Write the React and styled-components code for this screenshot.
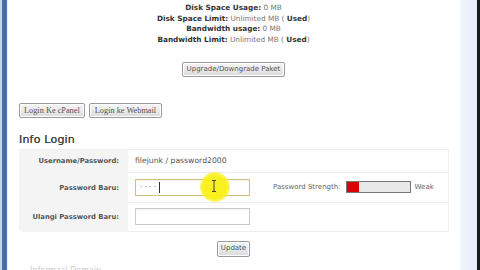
import React from "react";
import styled, { createGlobalStyle } from "styled-components";

const Global = createGlobalStyle`
  html, body { margin: 0; padding: 0; background: #fff; }
  body { width: 480px; height: 270px; overflow: hidden; font-family: "DejaVu Sans", Verdana, sans-serif; }
  #root { width: 480px; height: 270px; }
`;

const Frame = styled.div`
  display: flex;
  width: 480px;
  height: 270px;
  overflow: hidden;
`;

const LeftBar = styled.div`
  width: 8px;
  flex: none;
  background: linear-gradient(90deg, #c9d3e2 0, #c9d3e2 2px, #4f77b3 2px, #3c64a3 5px, #5a80b8 7px, #dfe6f0 7px, #f4f6f9 8px);
`;

const Main = styled.main`
  flex: 1;
  display: flex;
  flex-direction: column;
  padding: 3px 12px 0 11px;
  background: #fff;
  min-width: 0;
`;

const RightStrip = styled.div`
  width: 17px;
  flex: none;
  background: linear-gradient(90deg, #f2f6fd, #e5edfb);
`;

const Edge = styled.div`
  width: 3px;
  flex: none;
  background: #1a1a1a;
`;

const Stats = styled.div`
  text-align: center;
  font-size: 7.3px;
  line-height: 10.7px;
  color: #777;
`;

const Label = styled.b`
  color: #333;
  font-weight: bold;
`;

const CenterRow = styled.div`
  display: flex;
  justify-content: ${(p) => (p.$left ? "flex-start" : "center")};
  gap: 4px;
  margin-top: ${(p) => p.$mt}px;
`;

const Button = styled.button`
  font-family: ${(p) => (p.$serif ? '"Liberation Serif", serif' : '"DejaVu Sans", sans-serif')};
  font-size: ${(p) => (p.$serif ? "8.3px" : "7px")};
  color: #555;
  height: ${(p) => p.$h || 15}px;
  padding: 0 ${(p) => p.$px || 3}px;
  background: linear-gradient(#f6f6f6, #dcdcdc);
  border: 1px solid #9a9a9a;
  border-radius: 2px;
  box-shadow: inset 0 0 0 1px #fff;
  line-height: 13px;
`;

const Heading = styled.h2`
  margin: 15px 0 0;
  font-size: 11px;
  font-weight: normal;
  color: #444;
  letter-spacing: 0.2px;
  text-shadow: 0 0 0.4px #444;
  line-height: 14px;
`;

const Table = styled.div`
  display: grid;
  grid-template-columns: 109px 1fr;
  margin-top: 2px;
  border-top: 1px solid #eee;
  border-right: 1px solid #f0eeee;
  width: 429px;
`;

const LabelCell = styled.div`
  background: #f4f4f4;
  height: ${(p) => p.$h}px;
  display: flex;
  align-items: center;
  justify-content: flex-end;
  padding-right: 9px;
  font-size: 6.8px;
  font-weight: bold;
  color: #555;
  border-radius: ${(p) => (p.$last ? "0 0 0 4px" : "0")};
`;

const ValueCell = styled.div`
  position: relative;
  height: ${(p) => p.$h}px;
  display: flex;
  align-items: center;
  padding-left: 7px;
  border-bottom: 1px solid #eee;
  box-sizing: border-box;
  font-size: 7px;
  color: #555;
`;

const Value = styled.span`
  font-size: 7.7px;
  color: #555;
`;

const Input = styled.div`
  width: 115px;
  height: 17px;
  box-sizing: border-box;
  border: 1px solid ${(p) => (p.$focus ? "#d4c27a" : "#c8c8c8")};
  background: #fff;
  display: flex;
  align-items: center;
  padding-left: 4px;
  font-size: 7px;
  color: #666;
  letter-spacing: 2.4px;
  box-shadow: inset 0 1px 1px rgba(0,0,0,0.05);
`;

const Caret = styled.span`
  width: 1px;
  height: 11px;
  background: #333;
`;

const Strength = styled.div`
  display: flex;
  align-items: center;
  margin-left: 23px;
  gap: 5px;
  color: #666;
`;

const Meter = styled.div`
  width: 65px;
  height: 12px;
  box-sizing: border-box;
  border: 1px solid #777;
  background: #e9e9e9;
  display: flex;
  margin-right: -1px;
`;

const MeterFill = styled.div`
  background: #d80000;
  height: 100%;
`;

const Highlight = styled.div`
  position: absolute;
  left: 72px;
  top: -1px;
  width: 30px;
  height: 30px;
  border-radius: 50%;
  background: radial-gradient(circle, rgba(250,240,20,0.95) 55%, rgba(250,240,40,0.5) 75%, rgba(255,255,255,0) 100%);
  pointer-events: none;
`;

const Beam = styled.svg`
  position: absolute;
  left: 83px;
  top: 7px;
`;

const Tail = styled.div`
  margin-top: 10px;
  padding-left: 11px;
  font-size: 8px;
  color: #ccc;
  line-height: 8px;
`;

export default function App() {
  return (
    <>
      <Global />
      <Frame>
        <LeftBar />
        <Main>
          <Stats>
            <div><Label>Disk Space Usage:</Label> 0 MB</div>
            <div><Label>Disk Space Limit:</Label> Unlimited MB ( <Label>Used</Label>)</div>
            <div><Label>Bandwidth usage:</Label> 0 MB</div>
            <div><Label>Bandwidth Limit:</Label> Unlimited MB ( <Label>Used</Label>)</div>
          </Stats>
          <CenterRow $mt={16}>
            <Button $px={4}>Upgrade/Downgrade Paket</Button>
          </CenterRow>
          <CenterRow $left $mt={26}>
            <Button $serif $px={4}>Login Ke cPanel</Button>
            <Button $serif $px={5}>Login ke Webmail</Button>
          </CenterRow>
          <Heading>Info Login</Heading>
          <Table>
            <LabelCell $h={23}>Username/Password:</LabelCell>
            <ValueCell $h={23}><Value>filejunk / password2000</Value></ValueCell>
            <LabelCell $h={30}>Password Baru:</LabelCell>
            <ValueCell $h={30}>
              <Input $focus>····<Caret /></Input>
              <Strength>
                Password Strength:
                <Meter><MeterFill style={{ width: "20%" }} /></Meter>
                Weak
              </Strength>
              <Highlight />
              <Beam width="6" height="12" viewBox="0 0 6 12">
                <path d="M1 0.5h4M3 0.5v11M1 11.5h4" stroke="#444" strokeWidth="1" fill="none" />
              </Beam>
            </ValueCell>
            <LabelCell $h={29} $last>Ulangi Password Baru:</LabelCell>
            <ValueCell $h={29}><Input /></ValueCell>
          </Table>
          <CenterRow $mt={9}>
            <Button $h={16}>Update</Button>
          </CenterRow>
          <Tail>Informasi Domain</Tail>
        </Main>
        <RightStrip />
        <Edge />
      </Frame>
    </>
  );
}
